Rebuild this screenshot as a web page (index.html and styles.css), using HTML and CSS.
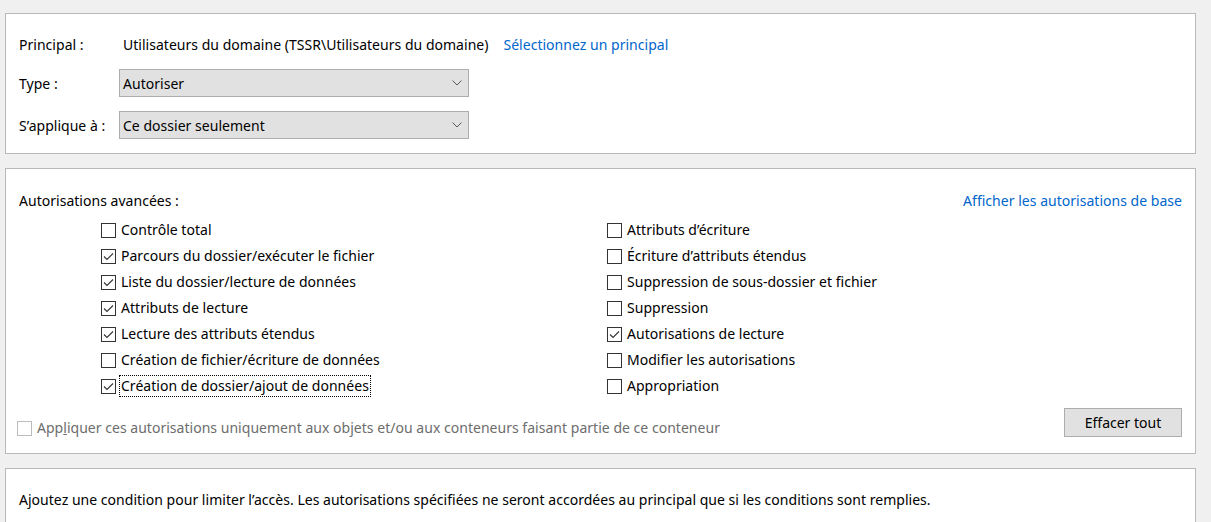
FILE: index.html
```html
<!DOCTYPE html>
<html lang="fr">
<head>
<meta charset="utf-8">
<title>Entrée d'autorisation</title>
<link rel="stylesheet" href="styles.css">
</head>
<body>
<div class="page">
  <section class="panel panel-principal">
    <div class="form-row row-principal">
      <span class="label">Principal :</span>
      <span class="value">Utilisateurs du domaine (TSSR\Utilisateurs du domaine)</span>
      <a class="link link-principal" href="#">Sélectionnez un principal</a>
    </div>
    <div class="form-row row-type">
      <span class="label">Type :</span>
      <div class="select"><span>Autoriser</span><svg class="chev" width="10" height="6" viewBox="0 0 10 6"><polyline points="0.5,0.5 5,5 9.5,0.5" fill="none" stroke="#5a5a5a" stroke-width="1"/></svg></div>
    </div>
    <div class="form-row row-applies">
      <span class="label">S’applique à :</span>
      <div class="select"><span>Ce dossier seulement</span><svg class="chev" width="10" height="6" viewBox="0 0 10 6"><polyline points="0.5,0.5 5,5 9.5,0.5" fill="none" stroke="#5a5a5a" stroke-width="1"/></svg></div>
    </div>
  </section>

  <section class="panel panel-perms">
    <div class="perms-head">
      <span>Autorisations avancées :</span>
      <a class="link" href="#">Afficher les autorisations de base</a>
    </div>
    <div class="perms-grid">
      <div class="col">
        <label class="cb"><span class="box"></span><span class="txt">Contrôle total</span></label>
        <label class="cb"><span class="box checked"><svg viewBox="0 0 15 15" width="15" height="15"><polyline points="3,7.5 6,10.5 12,4.5" fill="none" stroke="#333" stroke-width="1.1"/></svg></span><span class="txt">Parcours du dossier/exécuter le fichier</span></label>
        <label class="cb"><span class="box checked"><svg viewBox="0 0 15 15" width="15" height="15"><polyline points="3,7.5 6,10.5 12,4.5" fill="none" stroke="#333" stroke-width="1.1"/></svg></span><span class="txt">Liste du dossier/lecture de données</span></label>
        <label class="cb"><span class="box checked"><svg viewBox="0 0 15 15" width="15" height="15"><polyline points="3,7.5 6,10.5 12,4.5" fill="none" stroke="#333" stroke-width="1.1"/></svg></span><span class="txt">Attributs de lecture</span></label>
        <label class="cb"><span class="box checked"><svg viewBox="0 0 15 15" width="15" height="15"><polyline points="3,7.5 6,10.5 12,4.5" fill="none" stroke="#333" stroke-width="1.1"/></svg></span><span class="txt">Lecture des attributs étendus</span></label>
        <label class="cb"><span class="box"></span><span class="txt">Création de fichier/écriture de données</span></label>
        <label class="cb"><span class="box checked"><svg viewBox="0 0 15 15" width="15" height="15"><polyline points="3,7.5 6,10.5 12,4.5" fill="none" stroke="#333" stroke-width="1.1"/></svg></span><span class="txt focus">Création de dossier/ajout de données</span></label>
      </div>
      <div class="col">
        <label class="cb"><span class="box"></span><span class="txt">Attributs d’écriture</span></label>
        <label class="cb"><span class="box"></span><span class="txt">Écriture d’attributs étendus</span></label>
        <label class="cb"><span class="box"></span><span class="txt">Suppression de sous-dossier et fichier</span></label>
        <label class="cb"><span class="box"></span><span class="txt">Suppression</span></label>
        <label class="cb"><span class="box checked"><svg viewBox="0 0 15 15" width="15" height="15"><polyline points="3,7.5 6,10.5 12,4.5" fill="none" stroke="#333" stroke-width="1.1"/></svg></span><span class="txt">Autorisations de lecture</span></label>
        <label class="cb"><span class="box"></span><span class="txt">Modifier les autorisations</span></label>
        <label class="cb"><span class="box"></span><span class="txt">Appropriation</span></label>
      </div>
    </div>
    <div class="perms-foot">
      <label class="cb disabled"><span class="box"></span><span class="txt">App<u>l</u>iquer ces autorisations uniquement aux objets et/ou aux conteneurs faisant partie de ce conteneur</span></label>
      <button class="btn" type="button">Effacer tout</button>
    </div>
  </section>

  <section class="panel panel-cond">
    <p>Ajoutez une condition pour limiter l’accès. Les autorisations spécifiées ne seront accordées au principal que si les conditions sont remplies.</p>
  </section>
</div>
</body>
</html>
```

FILE: styles.css
```css
html, body {
  margin: 0;
  padding: 0;
  background: #f0f0f0;
  overflow: hidden;
}
body {
  font-family: "Noto Sans", "Open Sans", "DejaVu Sans", sans-serif;
  font-size: 14px;
  letter-spacing: 0.025px;
  color: #000;
}
.page {
  padding: 13px 15px 0 5px;
  display: flex;
  flex-direction: column;
  gap: 14px;
}
.panel {
  background: #fff;
  border: 1px solid #b9b9b9;
  padding: 0 13px;
}
.link {
  color: #0066cc;
  text-decoration: none;
}

/* principal panel */
.panel-principal {
  padding-top: 16px;
  padding-bottom: 14px;
}
.form-row {
  display: flex;
  align-items: center;
  height: 28px;
}
.row-principal { margin-bottom: 11px; }
.row-type { margin-bottom: 14px; }
.label {
  width: 100px;
  flex: none;
}
.value {
  padding-left: 4px;
}
.link-principal {
  margin-left: 15px;
}
.select {
  width: 339px;
  height: 26px;
  border: 1px solid #adadad;
  background: #e1e1e1;
  display: flex;
  align-items: center;
  justify-content: space-between;
  padding: 0 6px 0 3px;
  box-sizing: content-box;
}
.chev { flex: none; }

/* permissions panel */
.panel-perms {
  padding-top: 18px;
  padding-bottom: 16px;
}
.perms-head {
  display: flex;
  justify-content: space-between;
  align-items: center;
  height: 26px;
  margin-bottom: 4px;
}
.perms-grid {
  display: grid;
  grid-template-columns: 506px auto;
  padding-left: 82px;
}
.col {
  display: flex;
  flex-direction: column;
}
.cb {
  display: flex;
  align-items: center;
  height: 26px;
  gap: 5px;
}
.box {
  width: 13px;
  height: 13px;
  border: 1px solid #333;
  background: #fff;
  flex: none;
  position: relative;
}
.box svg {
  position: absolute;
  left: -1px;
  top: -1px;
}
.txt {
  line-height: 20px;
  padding: 0 1px;
  border: 1px dotted transparent;
  margin-left: -2px;
}
.txt.focus {
  border-color: #000;
}
.perms-foot {
  display: flex;
  justify-content: space-between;
  align-items: flex-end;
  margin-top: 9px;
}
.cb.disabled {
  margin-left: -2px;
  height: 16px;
  margin-bottom: 1px;
  color: #6d6d6d;
}
.cb.disabled .box {
  border-color: #bcbcbc;
}
.btn {
  font: inherit;
  color: #000;
  width: 118px;
  height: 29px;
  background: #e1e1e1;
  border: 1px solid #adadad;
  padding: 0;
}

/* condition panel */
.panel-cond {
  height: 120px;
}
.panel-cond p {
  margin: 20px 0 0;
  line-height: 22px;
}
```
